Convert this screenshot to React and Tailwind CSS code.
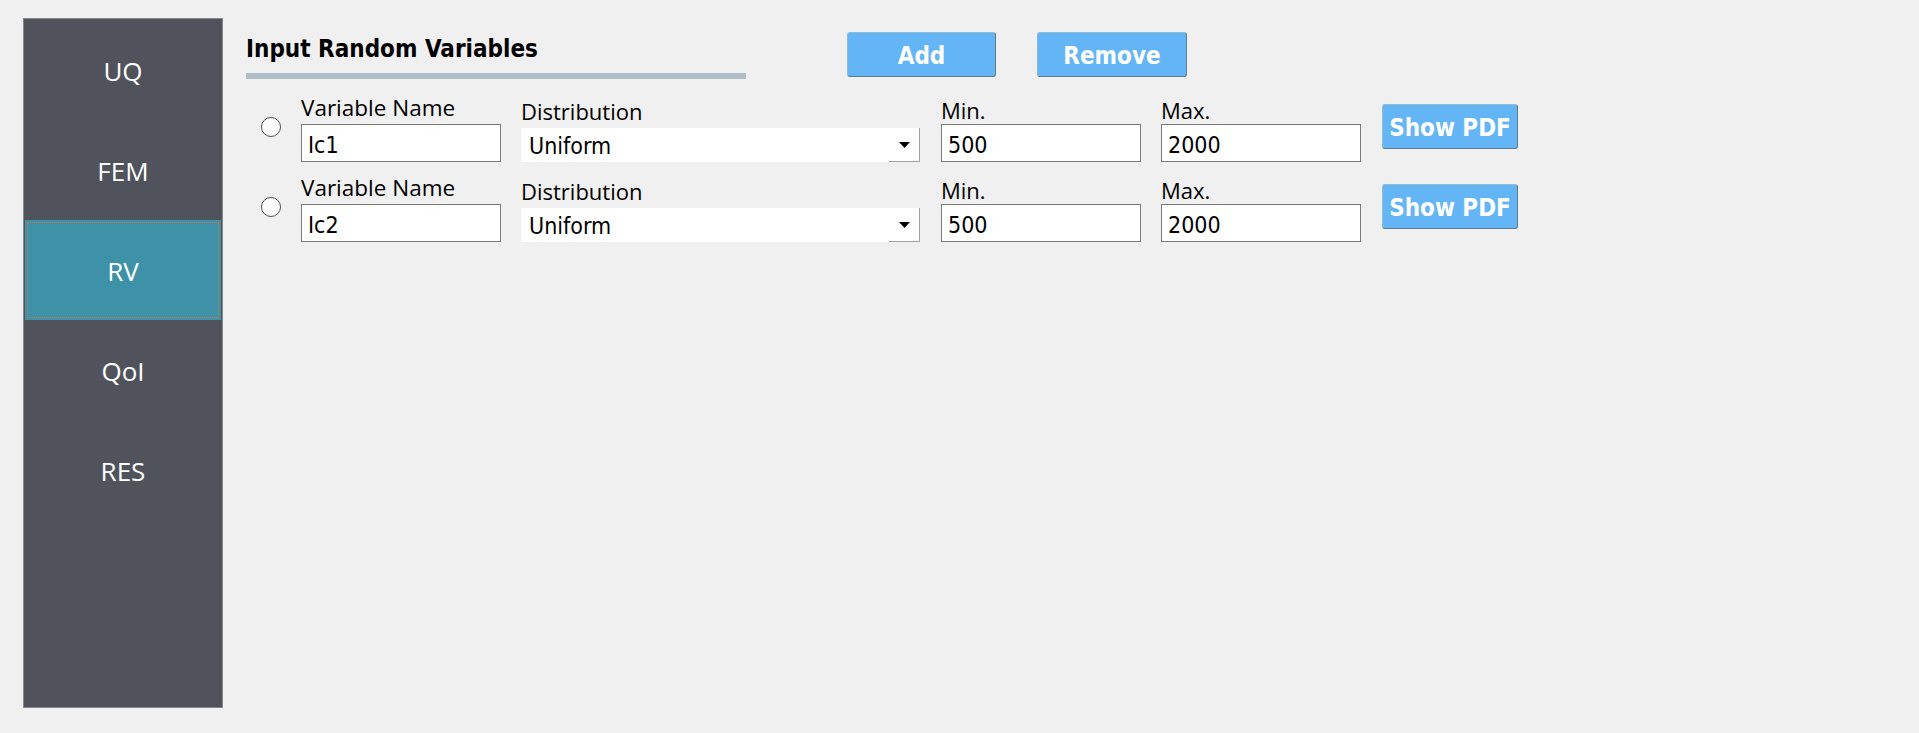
function NavItem({ label, active }) {
  return (
    <div
      className={
        active
          ? "h-[100px] flex items-center justify-center pt-[3px] bg-[#3e92a8] outline-1 outline-dotted outline-[#e0703c] outline-offset-[-3px] text-white text-[26px] font-['Open_Sans','Noto_Sans',sans-serif]"
          : "h-[100px] flex items-center justify-center pt-[3px] text-white text-[26px] font-['Open_Sans','Noto_Sans',sans-serif]"
      }
    >
      {label}
    </div>
  );
}

function BlueButton({ children, className }) {
  return (
    <div
      className={
        "flex items-center justify-center pt-[2px] bg-[#64b5f6] text-white font-bold text-[24px] rounded-[3px] border border-t-[#8dbbd3] border-l-[#8dbbd3] border-b-[#5b7d8e] border-r-[#5b7d8e] font-['DejaVu_Sans_Condensed','DejaVu_Sans',sans-serif] " +
        className
      }
    >
      {children}
    </div>
  );
}

function TextBox({ value }) {
  return (
    <div className="w-[200px] h-[38px] bg-white border border-[#7a7a7a] flex items-center pl-[6px] pt-[5px] text-[23px] text-black font-['DejaVu_Sans_Condensed','DejaVu_Sans',sans-serif]">
      {value}
    </div>
  );
}

function Row({ name, min, max }) {
  return (
    <div className="flex items-start h-[80px]">
      <div className="ml-[15px] mt-[21px] w-[20px] h-[20px] rounded-full border border-[#4d4d4d] bg-white shrink-0" />
      <div className="ml-[20px] pt-[2px] flex flex-col">
        <div className="h-[20px] leading-[20px] text-[22.5px] text-black font-['Open_Sans','Noto_Sans',sans-serif] whitespace-nowrap">
          Variable Name
        </div>
        <div className="mt-[6px]">
          <TextBox value={name} />
        </div>
      </div>
      <div className="ml-[20px] pt-[5px] flex flex-col">
        <div className="h-[20px] leading-[20px] text-[22px] text-black font-['Open_Sans','Noto_Sans',sans-serif] whitespace-nowrap">
          Distribution
        </div>
        <div className="mt-[7px] w-[399px] h-[34px] bg-white flex">
          <div className="flex-1 flex items-center pl-[8px] pt-[2px] text-[23px] text-black font-['DejaVu_Sans_Condensed','DejaVu_Sans',sans-serif]">
            Uniform
          </div>
          <div className="w-[31px] h-[34px] border-r border-b border-[#a0a0a0] flex items-center justify-center">
            <svg width="11" height="6" viewBox="0 0 11 6">
              <polygon points="0,0 11,0 5.5,6" fill="#000" />
            </svg>
          </div>
        </div>
      </div>
      <div className="ml-[21px] pt-[4px] flex flex-col">
        <div className="h-[20px] leading-[20px] text-[22px] text-black font-['Open_Sans','Noto_Sans',sans-serif] whitespace-nowrap">
          Min.
        </div>
        <div className="mt-[4px]">
          <TextBox value={min} />
        </div>
      </div>
      <div className="ml-[20px] pt-[4px] flex flex-col">
        <div className="h-[20px] leading-[20px] text-[22px] text-black font-['Open_Sans','Noto_Sans',sans-serif] whitespace-nowrap">
          Max.
        </div>
        <div className="mt-[4px]">
          <TextBox value={max} />
        </div>
      </div>
      <BlueButton className="ml-[21px] mt-[8px] w-[136px] h-[45px]">Show PDF</BlueButton>
    </div>
  );
}

export default function App() {
  const nav = ["UQ", "FEM", "RV", "QoI", "RES"];
  return (
    <div className="w-[1919px] h-[733px] bg-[#f0f0f0] flex items-start pl-[23px] pt-[18px] overflow-hidden">
      <div className="w-[200px] h-[690px] bg-[#50535b] border border-[#85888d] p-px flex flex-col shrink-0">
        {nav.map((n) => (
          <NavItem key={n} label={n} active={n === "RV"} />
        ))}
      </div>
      <div className="ml-[23px] flex flex-col">
        <div className="flex items-start">
          <div className="w-[500px] flex flex-col">
            <div className="mt-[17px] h-[28px] leading-[28px] text-[24px] font-bold text-black whitespace-nowrap font-['DejaVu_Sans_Condensed','DejaVu_Sans',sans-serif]">
              Input Random Variables
            </div>
            <div className="mt-[10px] h-[6px] bg-[#b0bec6]" />
          </div>
          <BlueButton className="ml-[101px] mt-[14px] w-[149px] h-[45px]">Add</BlueButton>
          <BlueButton className="ml-[41px] mt-[14px] w-[150px] h-[45px]">Remove</BlueButton>
        </div>
        <div className="mt-[17px] flex flex-col">
          <Row name="Ic1" min="500" max="2000" />
          <Row name="Ic2" min="500" max="2000" />
        </div>
      </div>
    </div>
  );
}
